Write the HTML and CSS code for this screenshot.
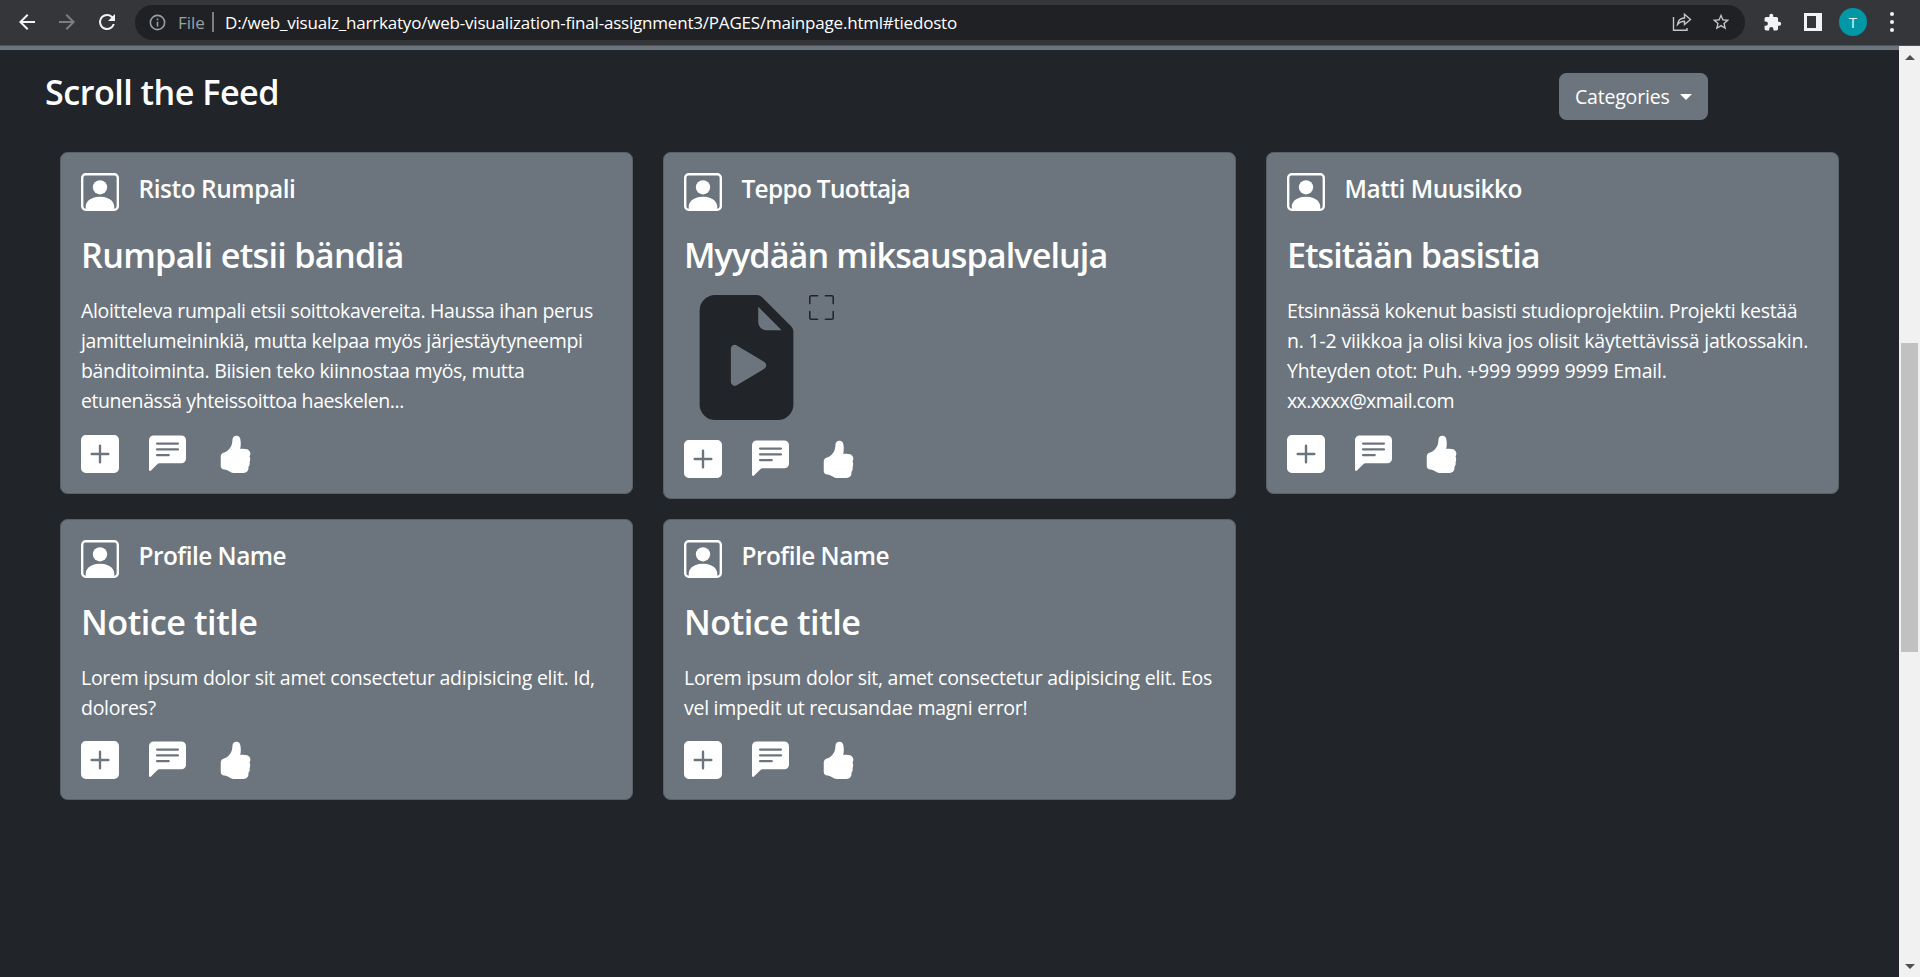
FILE: index.html
```html
<!DOCTYPE html>
<html lang="fi">
<head>
<meta charset="utf-8">
<title>Scroll the Feed</title>
<link rel="stylesheet" href="styles.css">
</head>
<body>
<svg class="sprite" aria-hidden="true">
  <symbol id="person" viewBox="0 0 16 16"><path d="M11 6a3 3 0 1 1-6 0 3 3 0 0 1 6 0z"/><path d="M2 0a2 2 0 0 0-2 2v12a2 2 0 0 0 2 2h12a2 2 0 0 0 2-2V2a2 2 0 0 0-2-2H2zm12 1a1 1 0 0 1 1 1v12a1 1 0 0 1-1 1v-1c0-1-1-4-6-4s-6 3-6 4v1a1 1 0 0 1-1-1V2a1 1 0 0 1 1-1h12z"/></symbol>
  <symbol id="plus" viewBox="0 0 16 16"><path d="M2 0a2 2 0 0 0-2 2v12a2 2 0 0 0 2 2h12a2 2 0 0 0 2-2V2a2 2 0 0 0-2-2H2zm6.5 4.5v3h3a.5.5 0 0 1 0 1h-3v3a.5.5 0 0 1-1 0v-3h-3a.5.5 0 0 1 0-1h3v-3a.5.5 0 0 1 1 0z"/></symbol>
  <symbol id="chat" viewBox="0 0 16 16"><path d="M0 2a2 2 0 0 1 2-2h12a2 2 0 0 1 2 2v8a2 2 0 0 1-2 2H4.414a1 1 0 0 0-.707.293L.854 15.146A.5.5 0 0 1 0 14.793V2zm3.5 1a.5.5 0 0 0 0 1h9a.5.5 0 0 0 0-1h-9zm0 2.5a.5.5 0 0 0 0 1h9a.5.5 0 0 0 0-1h-9zm0 2.5a.5.5 0 0 0 0 1h5a.5.5 0 0 0 0-1h-5z"/></symbol>
  <symbol id="thumb" viewBox="0 0 16 16"><path d="M6.956 1.745C7.021.81 7.908.087 8.864.325l.261.066c.463.116.874.456 1.012.965.22.816.533 2.511.062 4.51a9.84 9.84 0 0 1 .443-.051c.713-.065 1.669-.072 2.516.21.518.173.994.681 1.2 1.273.184.532.16 1.162-.234 1.733.058.119.103.242.138.363.077.27.113.567.113.856 0 .289-.036.586-.113.856-.039.135-.09.273-.16.404.169.387.107.819-.003 1.148a3.163 3.163 0 0 1-.488.901c.054.152.076.312.076.465 0 .305-.089.625-.253.912C13.1 15.522 12.437 16 11.5 16H8c-.605 0-1.07-.081-1.466-.218a4.82 4.82 0 0 1-.97-.484l-.048-.03c-.504-.307-.999-.609-2.068-.722C2.682 14.464 2 13.846 2 13V9c0-.85.685-1.432 1.357-1.615.849-.232 1.574-.787 2.132-1.41.56-.627.914-1.28 1.039-1.639.199-.575.356-1.539.428-2.59z"/></symbol>
</svg>

<header class="toolbar">
  <svg class="nav-icon" viewBox="0 0 24 24"><path d="M20 11H7.83l5.59-5.59L12 4l-8 8 8 8 1.41-1.41L7.83 13H20v-2z"/></svg>
  <svg class="nav-icon nav-icon-off" viewBox="0 0 24 24"><path d="M12 4l-1.41 1.41L16.17 11H4v2h12.17l-5.58 5.59L12 20l8-8z"/></svg>
  <svg class="nav-icon" viewBox="0 0 24 24"><path d="M17.65 6.35A7.96 7.96 0 0 0 12 4a8 8 0 1 0 7.73 10h-2.08A6 6 0 1 1 12 6c1.66 0 3.14.69 4.22 1.78L13 11h7V4l-2.35 2.35z"/></svg>
  <div class="omnibox">
    <svg class="info" viewBox="0 0 24 24"><path d="M11 7h2v2h-2zm0 4h2v6h-2zm1-9a10 10 0 1 0 0 20 10 10 0 0 0 0-20zm0 18a8 8 0 1 1 0-16 8 8 0 0 1 0 16z"/></svg>
    <span class="scheme">File</span>
    <span class="divider"></span>
    <span class="url">D:/web_visualz_harrkatyo/web-visualization-final-assignment3/PAGES/mainpage.html#tiedosto</span>
    <svg class="share" viewBox="0 0 20 20"><path d="M1.500 5V18.300H15V16M5.500 12.500C6 8.500 8.500 6.200 12.500 6V2.200L18.500 7.500 12.500 12.500V9.200C9.500 9.200 7.500 10 5.500 12.500Z"/></svg>
    <svg class="star" viewBox="0 0 24 24"><path d="M22 9.240l-7.190-.620L12 2 9.190 8.630 2 9.240l5.460 4.730L5.820 21 12 17.270 18.180 21l-1.630-7.030L22 9.240zM12 15.400l-3.760 2.270 1-4.280-3.320-2.880 4.380-.380L12 6.100l1.710 4.040 4.380.380-3.320 2.880 1 4.280L12 15.400z"/></svg>
  </div>
  <svg class="puzzle" viewBox="0 0 24 24"><path d="M20.500 11H19V7a2 2 0 0 0-2-2h-4V3.500a2.500 2.500 0 0 0-5 0V5H4a2 2 0 0 0-2 2v3.800h1.500a2.700 2.700 0 0 1 0 5.400H2V20a2 2 0 0 0 2 2h3.800v-1.500a2.700 2.700 0 0 1 5.400 0V22H17a2 2 0 0 0 2-2v-4h1.500a2.500 2.500 0 0 0 0-5z"/></svg>
  <span class="panel"></span>
  <span class="avatar">T</span>
  <span class="dots"><i></i><i></i><i></i></span>
</header>

<div class="viewport">
  <main class="page">
    <div class="page-head">
      <h1 class="page-title">Scroll the Feed</h1>
      <button class="categories">Categories<span class="caret"></span></button>
    </div>
    <div class="feed">
      <article class="card card-drummer">
        <div class="who"><svg class="icon"><use href="#person"/></svg><h5 class="name">Risto Rumpali</h5></div>
        <h3 class="title">Rumpali etsii bändiä</h3>
        <p class="text"><span>Aloitteleva rumpali etsii soittokavereita. Haussa ihan perus</span> <span>jamittelumeininkiä, mutta kelpaa myös järjestäytyneempi</span> <span>bänditoiminta. Biisien teko kiinnostaa myös, mutta</span> <span class="line-tight">etunenässä yhteissoittoa haeskelen...</span></p>
        <div class="actions"><svg class="icon"><use href="#plus"/></svg><svg class="icon icon-chat"><use href="#chat"/></svg><svg class="icon"><use href="#thumb"/></svg></div>
      </article>
      <article class="card card-producer">
        <div class="who"><svg class="icon"><use href="#person"/></svg><h5 class="name">Teppo Tuottaja</h5></div>
        <h3 class="title">Myydään miksauspalveluja</h3>
        <div class="media">
          <svg class="file" viewBox="0 0 16 16"><path d="M9.293 0H4a2 2 0 0 0-2 2v12a2 2 0 0 0 2 2h8a2 2 0 0 0 2-2V4.707A1 1 0 0 0 13.707 4L10 .293A1 1 0 0 0 9.293 0zM9.500 3.500v-2l3 3h-2a1 1 0 0 1-1-1zM6 6.883a.5.5 0 0 1 .757-.429l3.528 2.117a.5.5 0 0 1 0 .858l-3.528 2.117a.5.5 0 0 1-.757-.43V6.884z"/></svg>
          <svg class="expand" viewBox="0 0 16 16"><path d="M1.500 1a.5.5 0 0 0-.5.5v4a.5.5 0 0 1-1 0v-4A1.500 1.500 0 0 1 1.500 0h4a.5.5 0 0 1 0 1h-4zM10 .5a.5.5 0 0 1 .5-.5h4A1.500 1.500 0 0 1 16 1.500v4a.5.5 0 0 1-1 0v-4a.5.5 0 0 0-.5-.5h-4a.5.5 0 0 1-.5-.5zM.5 10a.5.5 0 0 1 .5.5v4a.5.5 0 0 0 .5.5h4a.5.5 0 0 1 0 1h-4A1.500 1.500 0 0 1 0 14.500v-4a.5.5 0 0 1 .5-.5zm15 0a.5.5 0 0 1 .5.5v4a1.500 1.500 0 0 1-1.500 1.500h-4a.5.5 0 0 1 0-1h4a.5.5 0 0 0 .5-.5v-4a.5.5 0 0 1 .5-.5z"/></svg>
        </div>
        <div class="actions"><svg class="icon"><use href="#plus"/></svg><svg class="icon icon-chat"><use href="#chat"/></svg><svg class="icon"><use href="#thumb"/></svg></div>
      </article>
      <article class="card card-musician">
        <div class="who"><svg class="icon"><use href="#person"/></svg><h5 class="name">Matti Muusikko</h5></div>
        <h3 class="title">Etsitään basistia</h3>
        <p class="text"><span>Etsinnässä kokenut basisti studioprojektiin. Projekti kestää</span> <span class="line-loose">n. 1-2 viikkoa ja olisi kiva jos olisit käytettävissä jatkossakin.</span> <span class="line-loose">Yhteyden otot: Puh. +999 9999 9999 Email.</span> <span class="line-mail">xx.xxxx@xmail.com</span></p>
        <div class="actions"><svg class="icon"><use href="#plus"/></svg><svg class="icon icon-chat"><use href="#chat"/></svg><svg class="icon"><use href="#thumb"/></svg></div>
      </article>
      <article class="card card-notice">
        <div class="who"><svg class="icon"><use href="#person"/></svg><h5 class="name">Profile Name</h5></div>
        <h3 class="title">Notice title</h3>
        <p class="text"><span>Lorem ipsum dolor sit amet consectetur adipisicing elit. Id,</span> <span>dolores?</span></p>
        <div class="actions"><svg class="icon"><use href="#plus"/></svg><svg class="icon icon-chat"><use href="#chat"/></svg><svg class="icon"><use href="#thumb"/></svg></div>
      </article>
      <article class="card card-notice">
        <div class="who"><svg class="icon"><use href="#person"/></svg><h5 class="name">Profile Name</h5></div>
        <h3 class="title">Notice title</h3>
        <p class="text"><span>Lorem ipsum dolor sit, amet consectetur adipisicing elit. Eos</span> <span>vel impedit ut recusandae magni error!</span></p>
        <div class="actions"><svg class="icon"><use href="#plus"/></svg><svg class="icon icon-chat"><use href="#chat"/></svg><svg class="icon"><use href="#thumb"/></svg></div>
      </article>
    </div>
  </main>
  <div class="scrollbar"><span class="up"></span><span class="handle"></span><span class="down"></span></div>
</div>
</body>
</html>
```
FILE: styles.css
```css
* { box-sizing: border-box; }
body {
  margin: 0;
  height: 977px;
  display: flex;
  flex-direction: column;
  overflow: hidden;
  background: #212529;
  color: #fff;
  font-family: "Open Sans", "Noto Sans", sans-serif;
  font-size: 19.5px;
  line-height: 30px;
}
h1, h3, h5, p { margin: 0; }
svg { display: block; fill: currentColor; flex: none; }
.sprite { position: absolute; width: 0; height: 0; }

/* Browser toolbar */
.toolbar {
  flex: none;
  height: 46px;
  display: flex;
  align-items: center;
  padding: 0 0 1px 15px;
  background: #35363a;
  border-bottom: 1px solid #505357;
  color: #f1f3f4;
}
.nav-icon { width: 24px; height: 24px; margin-right: 16px; }
.nav-icon-off { color: #7d7e80; }
.omnibox {
  width: 1610px;
  height: 35px;
  display: flex;
  align-items: center;
  padding: 0 13px;
  border-radius: 18px;
  background: #202124;
  font-size: 17px;
  white-space: nowrap;
}
.info { width: 19px; height: 19px; margin-top: 1px; color: #9aa0a6; }
.scheme { width: 26px; margin-left: 11px; padding-top: 1px; color: #9aa0a6; }
.divider { width: 2px; height: 20px; margin: 0 11px 0 8px; background: #7c7f83; }
.url { flex: 1; padding-top: 1px; color: #fff; letter-spacing: -0.2px; }
.share { width: 20px; height: 20px; margin-right: 1px; fill: none; stroke: #c4c7c5; stroke-width: 1.4; }
.star { width: 20px; height: 20px; margin-left: 18px; margin-right: 1px; color: #c4c7c5; }
.puzzle { width: 19px; height: 19px; margin-left: 18px; }
.panel { width: 18px; height: 18px; margin-left: 22px; border: 3px solid #f1f3f4; border-right-width: 6px; }
.avatar { width: 28px; height: 28px; margin-left: 17px; border-radius: 50%; background: #0097a7; font-size: 15px; line-height: 28px; text-align: center; }
.dots { display: grid; gap: 4px; margin-left: 23px; }
.dots i { width: 4px; height: 4px; border-radius: 50%; background: #f1f3f4; }

/* Page */
.viewport { flex: 1; display: flex; }
.page { flex: 1; border-top: 4px solid #6c757d; }
.page-head { height: 102px; display: flex; align-items: flex-start; justify-content: space-between; padding: 23px 191px 0 45px; }
.page-title { margin-top: -2px; font-size: 34.2px; line-height: 42px; font-weight: 600; letter-spacing: -0.54px; }
.categories {
  width: 149px;
  height: 47px;
  display: flex;
  align-items: center;
  padding: 0 16px;
  border: 0;
  border-radius: 7.5px;
  background: #6c757d;
  color: #fff;
  font: inherit;
  letter-spacing: -0.2px;
}
.caret { margin-left: auto; border: 6px solid transparent; border-top-color: #fff; border-bottom: 0; }

/* Feed cards */
.feed { display: grid; grid-template-columns: repeat(3, 573px); gap: 20px 30px; align-items: start; padding-left: 60px; }
.card { padding: 20px; border: 1px solid #5a6268; border-radius: 7.5px; background: #6c757d; }
.who { display: flex; gap: 19.5px; height: 61px; }
.icon { width: 38px; height: 38px; }
.icon-chat { width: 37px; margin-right: 1px; }
.name { padding-top: 1px; font-size: 24.4px; line-height: 30px; font-weight: 600; letter-spacing: -0.42px; }
.title { margin-bottom: 20px; font-size: 34.2px; line-height: 42px; font-weight: 600; white-space: nowrap; }
.text { margin-bottom: 18.5px; }
.text span { display: block; white-space: nowrap; }
.media { display: flex; height: 125px; margin: -1px 0 19.5px; color: #212529; }
.file { width: 125px; height: 125px; }
.expand { width: 25px; height: 25px; }
.actions { display: flex; gap: 29.5px; }

.card-drummer .title { letter-spacing: -0.7px; }
.card-drummer .text { letter-spacing: -0.33px; }
.card-drummer .line-tight { letter-spacing: -0.43px; }
.card-producer .name { letter-spacing: -0.68px; }
.card-producer .title { letter-spacing: -0.92px; }
.card-musician .name { letter-spacing: -0.47px; }
.card-musician .title { letter-spacing: -0.99px; }
.card-musician .text { letter-spacing: -0.34px; }
.card-musician .line-loose { letter-spacing: -0.19px; }
.card-musician .line-mail { letter-spacing: -0.6px; }
.card-notice .name { letter-spacing: -0.52px; }
.card-notice .title { letter-spacing: -0.46px; }
.card-notice .text { letter-spacing: -0.27px; }

/* Scrollbar */
.scrollbar { width: 21px; display: flex; flex-direction: column; align-items: center; background: #f1f1f1; }
.up { margin-top: 9px; border: 5px solid transparent; border-bottom-color: #505050; border-top: 0; }
.handle { width: 17px; height: 309px; margin-top: 283px; background: #c1c1c1; }
.down { margin-top: auto; margin-bottom: 8px; border: 5px solid transparent; border-top-color: #505050; border-bottom: 0; }
```
